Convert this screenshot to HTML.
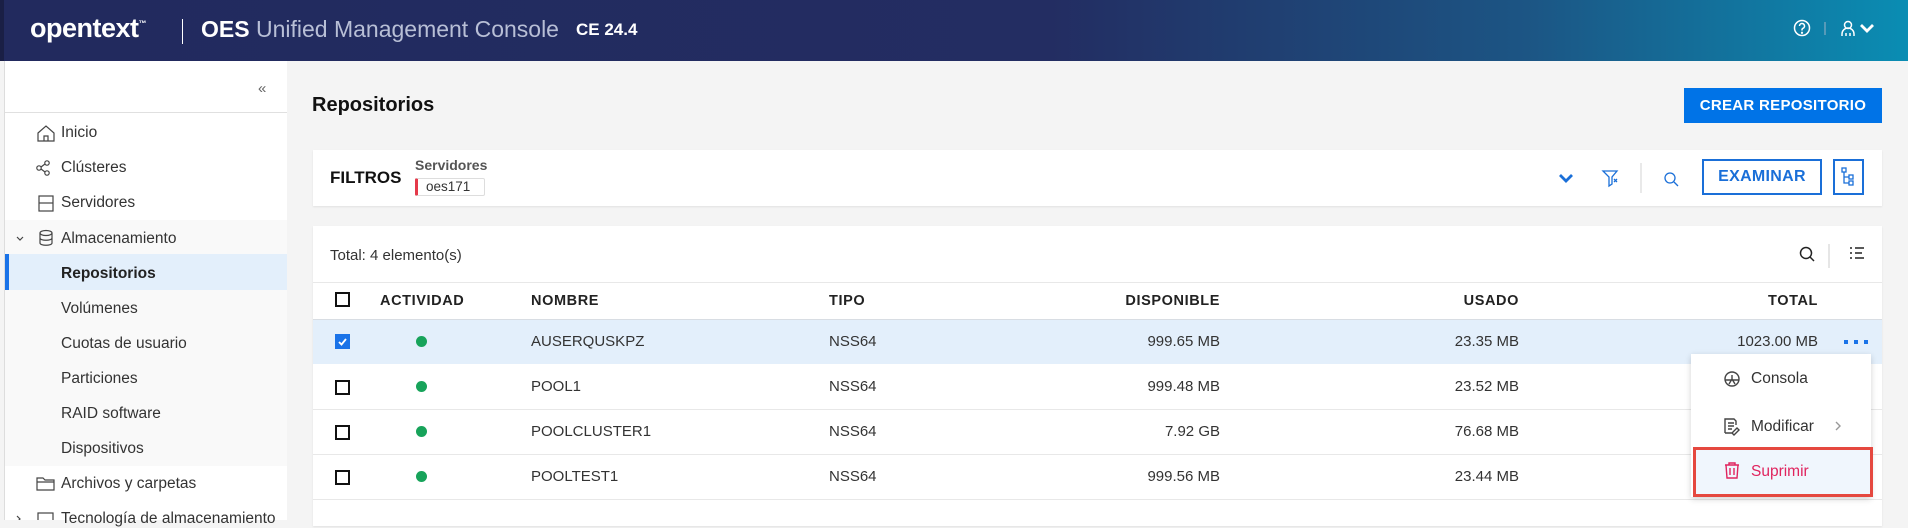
<!DOCTYPE html>
<html><head><meta charset="utf-8"><style>
*{box-sizing:border-box;margin:0;padding:0}
body{width:1908px;height:520px;overflow:hidden;background:#f4f4f4;font-family:"Liberation Sans",Arial,sans-serif;color:#333;position:relative}
.abs{position:absolute}
.hdr{left:0;top:0;width:1908px;height:61px;background:linear-gradient(90deg,#222a5e 0%,#232d62 55%,#1c5584 80%,#0a8db3 100%);border-left:4px solid #1a1f45}
.nav{left:4px;top:61px;width:283px;height:459px;background:#fff;border-left:1px solid #ddd}
.ni{position:absolute;left:61px;font-size:15.5px;color:#333}
.card{background:#fff;box-shadow:0 1px 2px rgba(0,0,0,.08)}
.th{position:absolute;top:293px;font-size:14.5px;font-weight:bold;letter-spacing:.6px;color:#222}
.td{position:absolute;font-size:15px;color:#333}
.cb{position:absolute;left:335px;width:15px;height:15px;border:2px solid #111;background:#fff}
.dot{position:absolute;left:416px;width:11px;height:11px;border-radius:50%;background:#17a35a}
.line{position:absolute;left:313px;width:1569px;height:1px;background:#e8e8e8}
</style></head><body>
<div class="abs hdr"></div>
<div class="abs" style="left:30px;top:13px;color:#fff;font-size:27px;font-weight:bold;letter-spacing:-0.5px">opentext<span style="font-size:8px;vertical-align:top;position:relative;top:6px">™</span></div>
<div class="abs" style="left:182px;top:19px;width:1px;height:25px;background:#fff"></div>
<div class="abs" style="left:201px;top:16px;font-size:23px;color:#fff;font-weight:bold">OES <span style="font-weight:normal;color:#b8bfd6">Unified Management Console</span></div>
<div class="abs" style="left:576px;top:20px;font-size:17px;color:#fff;font-weight:bold">CE 24.4</div>
<svg class="abs" style="left:1792px;top:18px" width="100" height="22" viewBox="0 0 100 22" fill="none" stroke="#fff" stroke-width="1.5">
<circle cx="10" cy="10" r="7.5"/><path d="M7.5 8a2.5 2.5 0 1 1 3.5 2.3c-.7.3-1 .8-1 1.5v.7"/><circle cx="10" cy="14.8" r=".4" fill="#fff"/>
<path d="M33 4v13" stroke="#9fb3c8" stroke-width="1"/>
<circle cx="56" cy="7" r="3.5"/><path d="M50 18v-2a6 6 0 0 1 12 0v2M54 15v3M58 15v3"/>
<path d="M69 7l6 6 6-6" stroke-width="2.8"/>
</svg>
<div class="abs nav"></div>
<div class="abs" style="left:258px;top:80px;font-size:15px;color:#666">«</div>
<div class="abs" style="left:5px;top:112px;width:282px;height:1px;background:#e0e0e0"></div>
<div class="abs" style="left:5px;top:220px;width:282px;height:246px;background:#f9f9f9"></div>
<div class="abs" style="left:5px;top:254px;width:282px;height:36px;background:#e3effb;border-left:4px solid #1a73e8"></div>
<svg class="abs" style="left:0;top:112px" width="60" height="408" fill="none" stroke="#444" stroke-width="1.2">
<path d="M38 21l8-7 8 7v8H38z M44 29v-5h4v5"/>
<circle cx="39" cy="56" r="2.2"/><circle cx="47" cy="51" r="2.2"/><circle cx="47" cy="61" r="2.2"/><path d="M41 55l4-3M41 57l4 3"/>
<rect x="39" y="84" width="14" height="15"/><path d="M39 91h14"/>
<path d="M17 125l3 3 3-3" /><ellipse cx="46" cy="121" rx="6" ry="2.5"/><path d="M40 121v10c0 3 12 3 12 0v-10M40 126c0 3 12 3 12 0"/>
<path d="M37 378v-12h6l2 2h9v10z M37 370h17"/>
<path d="M17 404l3 3 -3 3"/><rect x="38" y="401" width="15" height="12"/>
</svg>
<div class="ni" style="top:124px">Inicio</div>
<div class="ni" style="top:159px">Clústeres</div>
<div class="ni" style="top:194px">Servidores</div>
<div class="ni" style="top:230px">Almacenamiento</div>
<div class="ni" style="top:265px;font-weight:bold;color:#222">Repositorios</div>
<div class="ni" style="top:300px">Volúmenes</div>
<div class="ni" style="top:335px">Cuotas de usuario</div>
<div class="ni" style="top:370px">Particiones</div>
<div class="ni" style="top:405px">RAID software</div>
<div class="ni" style="top:440px">Dispositivos</div>
<div class="ni" style="top:475px">Archivos y carpetas</div>
<div class="ni" style="top:510px">Tecnología de almacenamiento</div>

<div class="abs" style="left:312px;top:94px;font-size:20px;font-weight:bold;color:#111">Repositorios</div>
<div class="abs" style="left:1684px;top:88px;width:198px;height:35px;background:#0073e7;color:#fff;font-weight:bold;font-size:15px;text-align:center;line-height:35px;letter-spacing:.3px">CREAR REPOSITORIO</div>

<div class="abs card" style="left:313px;top:150px;width:1569px;height:56px"></div>
<div class="abs" style="left:330px;top:168px;font-size:17px;font-weight:bold;color:#111">FILTROS</div>
<div class="abs" style="left:415px;top:157px;font-size:14px;font-weight:bold;color:#555">Servidores</div>
<div class="abs" style="left:415px;top:178px;width:70px;height:18px;border:1px solid #ddd;border-left:3px solid #e5394a;border-radius:2px;font-size:13.5px;line-height:16px;padding-left:8px">oes171</div>
<svg class="abs" style="left:1555px;top:156px" width="320" height="44" fill="none" stroke="#1a6fd8" stroke-width="1.3">
<path d="M5 19l6 6 6-6" stroke-width="2.8"/>
<path d="M48 15h14l-5 6v7l-3 2v-9z"/><path d="M59 23l3 3M62 23l-3 3"/>
<path d="M86 7v30" stroke="#ddd"/>
<circle cx="115" cy="22" r="5"/><path d="M119 26l4 4"/>
<rect x="148" y="4" width="118" height="34" stroke-width="2"/>
<rect x="279" y="4" width="29" height="34" stroke-width="2"/>
<rect x="287" y="12" width="4" height="4"/><rect x="294" y="19" width="4" height="4"/><rect x="294" y="25" width="4" height="4"/><path d="M289 16v11h5M289 21h5"/>
</svg>
<div class="abs" style="left:1702px;top:168px;width:120px;text-align:center;font-size:16px;font-weight:bold;color:#1a6fd8;letter-spacing:.3px">EXAMINAR</div>

<div class="abs card" style="left:313px;top:226px;width:1569px;height:300px"></div>
<div class="abs" style="left:330px;top:247px;font-size:15px;color:#333">Total: 4 elemento(s)</div>
<svg class="abs" style="left:1795px;top:240px" width="70" height="30" fill="none" stroke="#222" stroke-width="1.5">
<circle cx="11" cy="13" r="5.5"/><path d="M15 17l4 4"/>
<path d="M34 4v24" stroke="#ddd"/>
<path d="M55 8h2M55 13h2M55 18h2M60 8h9M60 13h7M60 18h9"/>
</svg>
<div class="line" style="top:282px"></div>
<div class="cb" style="top:292px"></div>
<div class="th" style="left:380px">ACTIVIDAD</div>
<div class="th" style="left:531px">NOMBRE</div>
<div class="th" style="left:829px">TIPO</div>
<div class="th" style="left:1000px;width:220px;text-align:right">DISPONIBLE</div>
<div class="th" style="left:1300px;width:219px;text-align:right">USADO</div>
<div class="th" style="left:1600px;width:218px;text-align:right">TOTAL</div>
<div class="abs" style="left:313px;top:319px;width:1569px;height:45px;background:#e3effb;border-top:1px solid #d8dde3"></div>
<div class="line" style="top:409px"></div><div class="line" style="top:454px"></div><div class="line" style="top:499px"></div>
<div class="cb" style="top:334px;background:#1a73e8;border-color:#1a73e8"></div>
<svg class="abs" style="left:337px;top:336px" width="11" height="11"><path d="M2 6l2.5 2.5L9 3" stroke="#fff" stroke-width="1.8" fill="none"/></svg>
<div class="cb" style="top:380px"></div><div class="cb" style="top:425px"></div><div class="cb" style="top:470px"></div>
<div class="dot" style="top:336px"></div><div class="dot" style="top:381px"></div><div class="dot" style="top:426px"></div><div class="dot" style="top:471px"></div>
<div class="td" style="left:531px;top:333px">AUSERQUSKPZ</div>
<div class="td" style="left:531px;top:378px">POOL1</div>
<div class="td" style="left:531px;top:423px">POOLCLUSTER1</div>
<div class="td" style="left:531px;top:468px">POOLTEST1</div>
<div class="td" style="left:829px;top:333px">NSS64</div><div class="td" style="left:829px;top:378px">NSS64</div><div class="td" style="left:829px;top:423px">NSS64</div><div class="td" style="left:829px;top:468px">NSS64</div>
<div class="td" style="left:1000px;width:220px;text-align:right;top:333px">999.65 MB</div>
<div class="td" style="left:1000px;width:220px;text-align:right;top:378px">999.48 MB</div>
<div class="td" style="left:1000px;width:220px;text-align:right;top:423px">7.92 GB</div>
<div class="td" style="left:1000px;width:220px;text-align:right;top:468px">999.56 MB</div>
<div class="td" style="left:1300px;width:219px;text-align:right;top:333px">23.35 MB</div>
<div class="td" style="left:1300px;width:219px;text-align:right;top:378px">23.52 MB</div>
<div class="td" style="left:1300px;width:219px;text-align:right;top:423px">76.68 MB</div>
<div class="td" style="left:1300px;width:219px;text-align:right;top:468px">23.44 MB</div>
<div class="td" style="left:1600px;width:218px;text-align:right;top:333px">1023.00 MB</div>
<svg class="abs" style="left:1844px;top:339px" width="26" height="6"><rect x="0" y="1" width="4" height="4" fill="#1a73e8"/><rect x="10" y="1" width="4" height="4" fill="#1a73e8"/><rect x="20" y="1" width="4" height="4" fill="#1a73e8"/></svg>

<div class="abs" style="left:1691px;top:354px;width:180px;height:143px;background:#fff;box-shadow:0 2px 6px rgba(0,0,0,.18)"></div>
<div class="abs" style="left:1693px;top:447px;width:180px;height:50px;background:#f0f6fd;border:3px solid #e5483f"></div>
<svg class="abs" style="left:1720px;top:368px" width="150" height="115" fill="none" stroke="#444" stroke-width="1.4">
<circle cx="12" cy="11" r="7"/><path d="M5 12h14M12 11v-4M9 16l3-5 3 5"/>
<path d="M5 65v-14h9l2 2v4M5 65h7M8 55h6M8 58h6M8 61h4M12 65l5-5 2 2-5 5z"/>
<path d="M116 54l4 4-4 4" stroke="#999"/>
<path d="M5 97h14M9 97v-2h6v2M6 97l1 13h10l1-13M10 100v7M14 100v7" stroke="#e0245e"/>
</svg>
<div class="abs" style="left:1751px;top:370px;font-size:15.5px;color:#333">Consola</div>
<div class="abs" style="left:1751px;top:418px;font-size:15.5px;color:#333">Modificar</div>
<div class="abs" style="left:1751px;top:463px;font-size:15.5px;color:#e0245e">Suprimir</div>
</body></html>
